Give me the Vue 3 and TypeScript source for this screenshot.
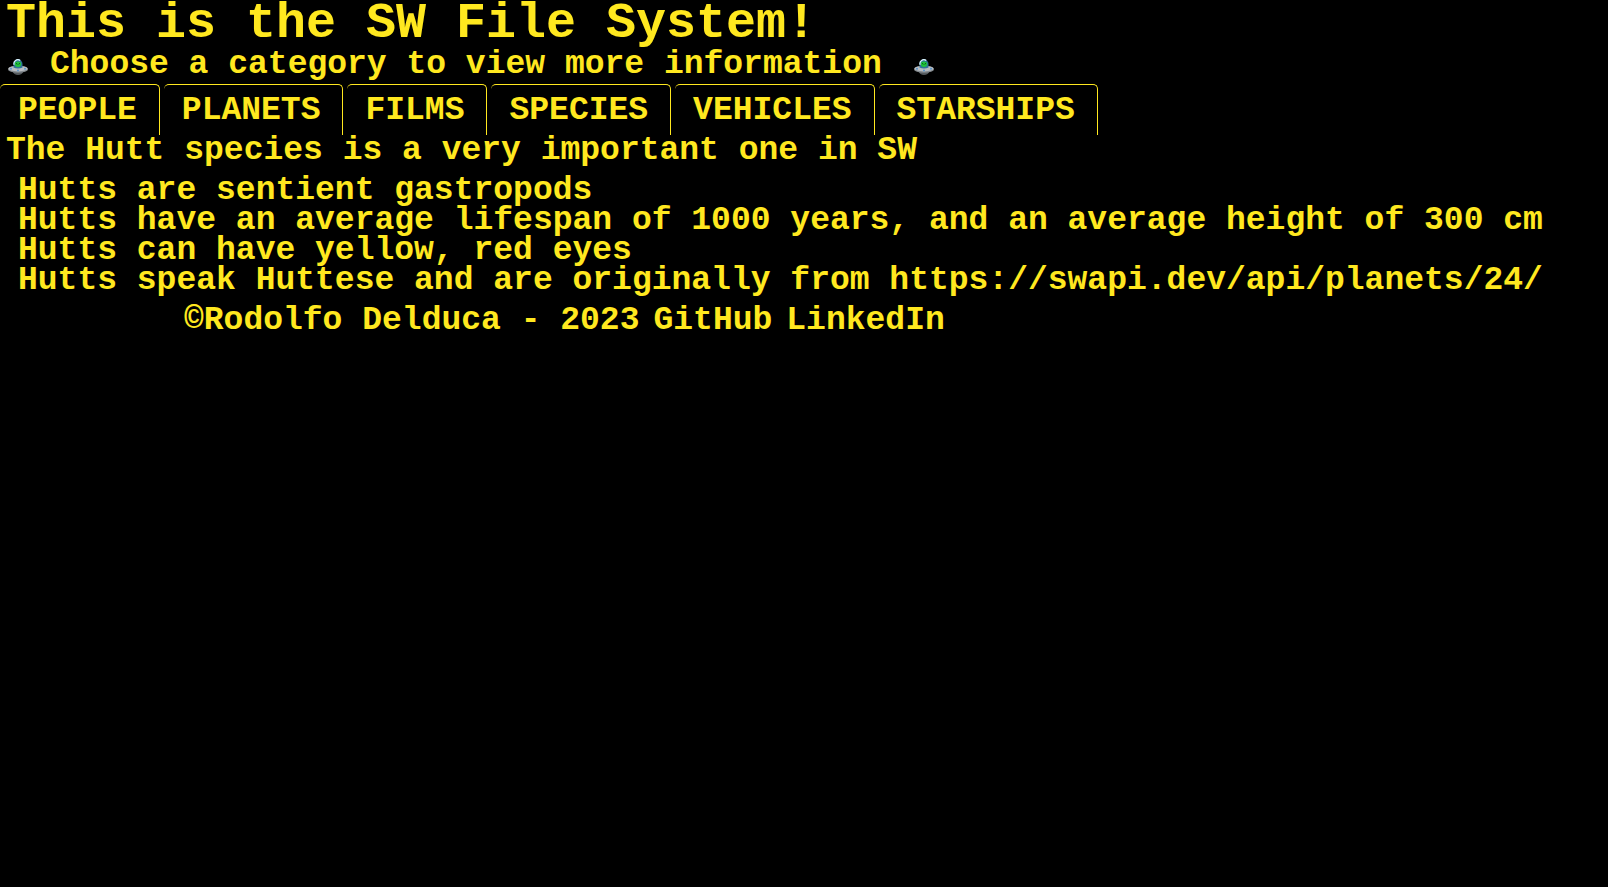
<script setup lang="ts">
import { ref } from 'vue'

const categories: string[] = ['PEOPLE', 'PLANETS', 'FILMS', 'SPECIES', 'VEHICLES', 'STARSHIPS']
const selected = ref<string>('SPECIES')

const facts: string[] = [
  'Hutts are sentient gastropods',
  'Hutts have an average lifespan of 1000 years, and an average height of 300 cm',
  'Hutts can have yellow, red eyes',
  'Hutts speak Huttese and are originally from https://swapi.dev/api/planets/24/',
]
</script>

<template>
  <div class="page">
    <header>
      <h1>This is the SW File System!</h1>
      <h2>
        <svg v-for="side in ['start', 'end']" :key="side" :class="['ufo', side]" viewBox="0 0 20 16" aria-hidden="true">
          <path d="M4.500 12h11c-.5 2.600-3 4-5.500 4s-5-1.400-5.500-4z" fill="#555a5e" />
          <ellipse cx="10" cy="10.400" rx="10" ry="3.400" fill="#83898e" />
          <ellipse cx="10" cy="9.600" rx="9.700" ry="2.800" fill="#b9bdc2" />
          <path d="M5.500 8.500V5a4.500 4.500 0 0 1 9 0v3.500c-2.500 1.300-6.500 1.300-9 0z" fill="#2f7596" />
          <path d="M6.200 5.800a3.800 3.800 0 0 1 6-4.200" fill="none" stroke="#d8f4ff" stroke-width="1.300" />
          <path d="M6.800 4.800c0-3.200 6.400-3.200 6.400 0 0 1.800-1 3.200-3.200 3.200s-3.200-1.400-3.200-3.200z" fill="#1fc43c" />
          <path d="M8 4.300l1.400 1M12 4.300l-1.400 1" stroke="#07551b" stroke-width="1" />
          <circle cx="3" cy="9.800" r="1" fill="#5994c8" />
          <circle cx="10" cy="11.400" r="1" fill="#5994c8" />
          <circle cx="17" cy="9.800" r="1" fill="#5994c8" />
        </svg>
        <span>Choose a category to view more information</span>
      </h2>
    </header>
    <nav class="tabs">
      <button
        v-for="name in categories"
        :key="name"
        type="button"
        :aria-pressed="selected === name"
        @click="selected = name"
      >{{ name }}</button>
    </nav>
    <main>
      <p>The Hutt species is a very important one in SW</p>
      <ul>
        <li v-for="fact in facts" :key="fact">{{ fact }}</li>
      </ul>
    </main>
    <footer>
      <span>©Rodolfo Delduca - 2023</span>
      <a href="#github">GitHub</a>
      <a href="#linkedin">LinkedIn</a>
    </footer>
  </div>
</template>

<style>
body {
  margin: 0;
  background: #000;
}
</style>

<style scoped>
.page {
  color: #ffe81f;
  font: bold 33px/30px "Liberation Mono", monospace;
}

h1,
h2,
p,
ul {
  margin: 0;
  padding: 0;
  font-weight: bold;
}

h1 {
  padding-left: 6px;
  font-size: 50px;
  line-height: 47px;
}

h2 {
  display: flex;
  align-items: center;
  gap: 22px;
  padding: 3px 8px 4px;
  font-size: 33px;
  line-height: 30px;
}

.ufo {
  flex: none;
  width: 20px;
  height: 16px;
  margin-top: 4px;
}

.ufo.end {
  order: 1;
  margin-left: 10px;
}

.tabs {
  display: flex;
  gap: 4px;
}

.tabs button {
  height: 51px;
  padding: 2px 22px 0 18px;
  border: 0 solid #ffe81f;
  border-width: 1px 1px 0 0;
  border-radius: 5px 5px 0 0;
  background: none;
  color: inherit;
  font: inherit;
  cursor: pointer;
}

main {
  padding-top: 1px;
}

main p {
  padding: 0 6px;
}

ul {
  padding: 10px 18px;
  list-style: none;
}

footer {
  display: flex;
  gap: 14px;
  padding-left: 184px;
}

footer a {
  color: inherit;
  text-decoration: none;
}
</style>
